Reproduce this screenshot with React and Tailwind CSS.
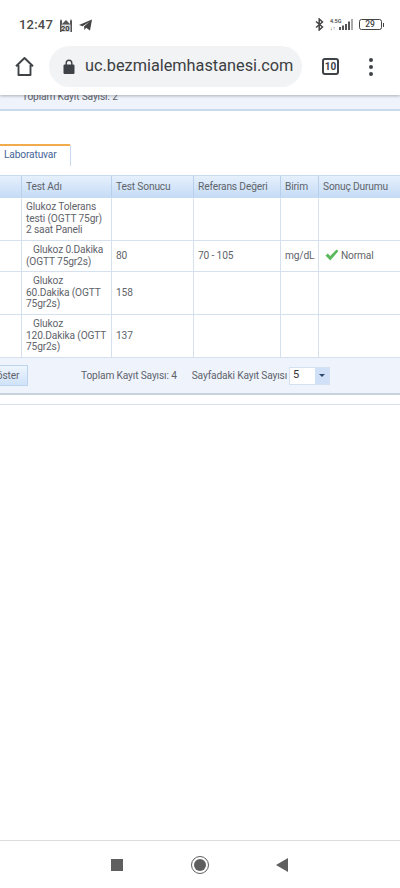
const font = { fontFamily: 'Roboto, "Liberation Sans", sans-serif' };

function HeaderCell({ children, last }) {
  return (
    <div className={`flex h-full items-center pl-[4px] whitespace-nowrap ${last ? "" : "border-r border-[#b9d0ea]"}`}>
      {children}
    </div>
  );
}

function Cell({ children, last }) {
  return (
    <div className={`flex h-full items-center pb-[1px] pl-[4px] ${last ? "" : "border-r border-[#d5e1ef]"}`}>
      {children}
    </div>
  );
}

function Row({ h, name, result, ref_, unit, status }) {
  return (
    <div className={`grid grid-cols-[22px_90px_82px_87px_38px_81px] border-b border-[#d5e1ef] ${h}`}>
      <Cell />
      <Cell>{name}</Cell>
      <Cell>{result}</Cell>
      <Cell>{ref_}</Cell>
      <Cell>{unit}</Cell>
      <Cell last>{status}</Cell>
    </div>
  );
}

function Name({ children }) {
  return <div className="w-[80px] leading-[11.5px]">{children}</div>;
}

export default function App() {
  return (
    <div style={font} className="relative flex h-[888px] w-[400px] flex-col overflow-hidden bg-white text-[10.2px] tracking-[-0.15px] text-[#5f646b]">
      {/* Status + toolbar */}
      <div className="relative z-10 h-[95px] bg-white tracking-normal shadow-[0_1px_3px_rgba(0,0,0,0.28)]">
        <div className="flex h-[41px] items-center pl-[19px] pr-[16px] pt-[8px] text-[#4a4a4a]">
          <span className="text-[13px] font-medium leading-none tracking-[0.2px]">12:47</span>
          <div className="relative ml-[6px] h-[15px] w-[14px] shrink-0">
            <svg width="14" height="15" viewBox="0 0 14 15">
              <path d="M1 15V4l1-2 1 2v3l4-4 4 4V4l1-2 1 2v11z" fill="#555" />
              <rect x="2.5" y="7.5" width="9" height="7.5" fill="#ddd" />
            </svg>
            <span className="absolute bottom-[0px] left-[2px] text-[7.5px] font-bold leading-none text-[#333]">20</span>
          </div>
          <svg className="ml-[6px] shrink-0" width="13" height="12" viewBox="0 0 13 12">
            <path d="M0 6 13 0.5 11 11.5 7.2 8.8 5.5 11 5 7.5 10.5 2.8 3.6 7.2z" fill="#444" />
          </svg>
          <div className="flex-1" />
          <svg className="shrink-0" width="9" height="13" viewBox="0 0 9 13" fill="none" stroke="#444" strokeWidth="1.5">
            <path d="M1 3.5 7.5 9 4.2 12V1L7.5 4 1 9.5" />
          </svg>
          <div className="ml-[6px] flex flex-col text-[5.5px] font-medium leading-[6.5px] text-[#444]">
            <span>4.5G</span>
            <span>↓↑</span>
          </div>
          <svg className="-ml-[4px] shrink-0" width="16" height="11" viewBox="0 0 16 11" fill="#555">
            <rect x="1" y="8" width="2" height="3" />
            <rect x="4" y="6.5" width="2" height="4.5" />
            <rect x="7" y="5" width="2" height="6" />
            <rect x="10" y="2.5" width="2" height="8.5" />
            <rect x="13" y="0" width="2" height="11" fill="#aaa" />
          </svg>
          <div className="ml-[5px] flex h-[11px] w-[23px] items-center justify-center rounded-[2.5px] border border-[#444] text-[8.5px] font-medium leading-none text-[#444]">
            29
          </div>
          <div className="ml-[1px] h-[4px] w-[1.5px] bg-[#444]" />
        </div>
        <div className="flex items-center pt-[5px]">
          <svg className="ml-[15px] shrink-0" width="19" height="19" viewBox="0 0 19 19" fill="none" stroke="#3f4347" strokeWidth="1.9" strokeLinejoin="round">
            <path d="M1 9.3 9.5 1 18 9.3M3.5 8V18H15.500V8" />
          </svg>
          <div className="ml-[15px] flex h-[41px] w-[253px] shrink-0 items-center rounded-full bg-[#f1f3f4] pl-[14px]">
            <svg className="shrink-0" width="12" height="15" viewBox="0 0 12 15" fill="#3f4347">
              <path d="M2.500 5.500V4a3.500 3.500 0 0 1 7 0v1.500h.8A1.200 1.200 0 0 1 11.500 6.700v7A1.200 1.200 0 0 1 10.300 15H1.700A1.200 1.200 0 0 1 .5 13.700v-7A1.200 1.200 0 0 1 1.700 5.500zM3.900 5.500h4.200V4a2.100 2.100 0 0 0-4.200 0z" />
            </svg>
            <span className="ml-[10px] whitespace-nowrap text-[16.300px] leading-none text-[#3c4043]">uc.bezmialemhastanesi.com</span>
          </div>
          <div className="ml-[20px] flex h-[17px] w-[17px] shrink-0 items-center justify-center rounded-[3px] border-2 border-[#3f4347] text-[10px] font-bold leading-none text-[#3f4347]">
            10
          </div>
          <div className="ml-[30px] flex flex-col gap-[3px]">
            <div className="h-[4px] w-[4px] rounded-full bg-[#3f4347]" />
            <div className="h-[4px] w-[4px] rounded-full bg-[#3f4347]" />
            <div className="h-[4px] w-[4px] rounded-full bg-[#3f4347]" />
          </div>
        </div>
      </div>

      {/* Upper panel, clipped by the toolbar */}
      <div className="h-[16px] overflow-hidden border-b-2 border-[#c9d9ee] bg-[#eef3fc] pl-[22px]">
        <div className="-mt-[4px] whitespace-nowrap leading-[12px]">Toplam Kayıt Sayısı: 2</div>
      </div>

      {/* Tab */}
      <div className="mt-[33px] h-[22px] w-[71px] rounded-tr-[2px] border-r border-t-2 border-r-[#c9d9ee] border-t-[#f0ab4d] pl-[4px] pt-[3px] leading-[12px] text-[#3f6496]">
        Laboratuvar
      </div>

      {/* Grid */}
      <div className="mt-[9px] grid h-[23px] grid-cols-[22px_90px_82px_87px_38px_81px] items-center border-y border-[#c9dbf0] bg-gradient-to-b from-[#e6f0fc] to-[#c5dcf6]">
        <HeaderCell />
        <HeaderCell>Test Adı</HeaderCell>
        <HeaderCell>Test Sonucu</HeaderCell>
        <HeaderCell>Referans Değeri</HeaderCell>
        <HeaderCell>Birim</HeaderCell>
        <HeaderCell last>Sonuç Durumu</HeaderCell>
      </div>
      <Row h="h-[43px]" name={<Name>Glukoz Tolerans testi (OGTT 75gr) 2 saat Paneli</Name>} />
      <Row
        h="h-[31px]"
        name={<Name><span className="whitespace-nowrap pl-[7px]">Glukoz 0.Dakika</span><br />(OGTT 75gr2s)</Name>}
        result="80"
        ref_="70 - 105"
        unit={<span className="whitespace-nowrap">mg/dL</span>}
        status={
          <span className="flex items-center pl-[2px]">
            <svg className="shrink-0" width="14" height="12" viewBox="0 0 14 12">
              <path d="M0.500 6.500 2.800 4.500 5.200 7 11.500 0.500 13.500 2 5.300 11.500z" fill="#5cb85c" />
            </svg>
            <span className="ml-[2px]">Normal</span>
          </span>
        }
      />
      <Row h="h-[43px]" name={<Name><span className="pl-[7px]">Glukoz</span><br />60.Dakika (OGTT 75gr2s)</Name>} result="158" />
      <Row h="h-[43px]" name={<Name><span className="pl-[7px]">Glukoz</span><br /><span className="whitespace-nowrap">120.Dakika (OGTT</span> 75gr2s)</Name>} result="137" />

      {/* Footer */}
      <div className="flex h-[37px] items-center border-b-2 border-[#c8d3df] bg-[#eef3fc]">
        <div className="-ml-[21px] flex h-[21px] w-[49px] shrink-0 items-center border border-[#bcd3ee] bg-gradient-to-b from-[#eef5fe] to-[#cfe2f9] pl-[10px]">
          Göster
        </div>
        <span className="ml-[53px] whitespace-nowrap">Toplam Kayıt Sayısı: 4</span>
        <span className="ml-[15px] whitespace-nowrap">Sayfadaki Kayıt Sayısı</span>
        <div className="ml-[2px] flex h-[18px] w-[41px] items-center border border-[#d5e1ef] bg-white">
          <span className="flex-1 pl-[3px] text-[11px] text-[#333]">5</span>
          <div className="flex h-full w-[14px] items-center justify-center bg-[#cfe0f7]">
            <div className="h-0 w-0 border-x-[3px] border-t-[3px] border-x-transparent border-t-[#2d4a6e]" />
          </div>
        </div>
      </div>
      <div className="mt-[9px] h-[1px] bg-[#d5e1ef]" />

      {/* Android navigation */}
      <div className="mt-auto flex h-[48px] items-center border-t border-[#dcdcdc] bg-white">
        <div className="ml-[111px] h-[12px] w-[12px] bg-[#5f5f5f]" />
        <div className="ml-[68px] flex h-[18px] w-[18px] items-center justify-center rounded-full border-[1.5px] border-[#5f5f5f]">
          <div className="h-[12px] w-[12px] rounded-full bg-[#5f5f5f]" />
        </div>
        <svg className="ml-[67px]" width="12" height="14" viewBox="0 0 12 14">
          <path d="M0 7 12 0V14z" fill="#5f5f5f" />
        </svg>
      </div>
    </div>
  );
}
